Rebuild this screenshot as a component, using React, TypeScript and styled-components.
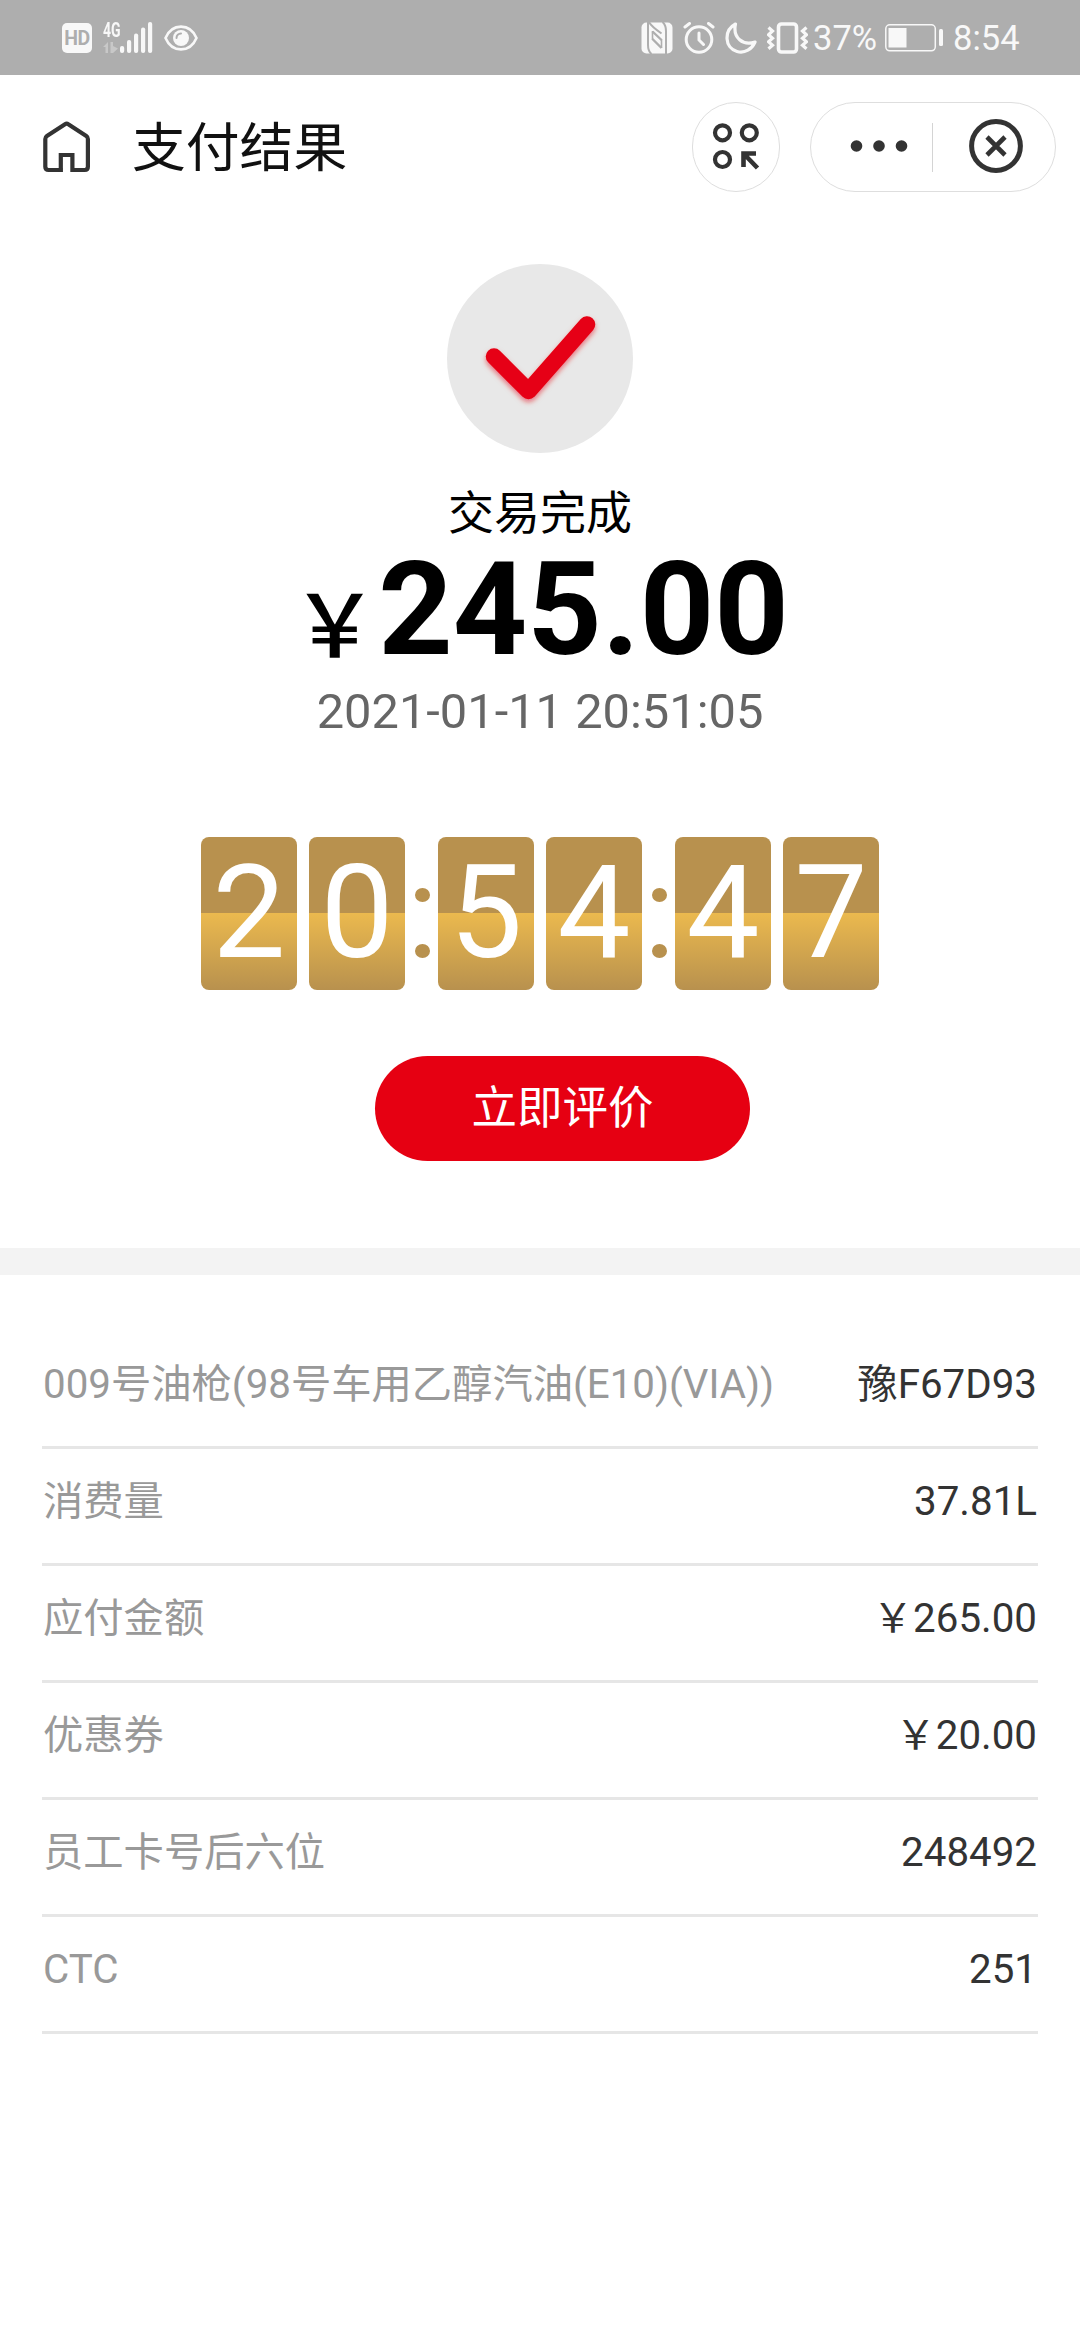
import React from "react";
import styled, { createGlobalStyle } from "styled-components";

const GlobalStyle = createGlobalStyle`
  * { box-sizing: border-box; }
  body {
    margin: 0;
    background: #fff;
    font-family: Roboto, "Noto Sans CJK SC", sans-serif;
  }
`;

const Screen = styled.div`
  width: 1080px;
  height: 2340px;
  display: flex;
  flex-direction: column;
  background: #fff;
  overflow: hidden;
`;

const StatusBar = styled.div`
  height: 75px;
  flex: none;
  display: flex;
  justify-content: space-between;
  align-items: center;
  padding: 0 61px 0 62px;
  background: #aeaeae;
  color: #f8f8f8;
`;

const StatusGroup = styled.div<{ $gap: number }>`
  display: flex;
  align-items: center;
  gap: ${(p) => p.$gap}px;
  height: 75px;
`;

const HdBadge = styled.span`
  width: 30px;
  height: 30px;
  border-radius: 5px;
  background: #f8f8f8;
  color: #aeaeae;
  font: 700 19.5px/31px Roboto, sans-serif;
  text-align: center;
  letter-spacing: -0.5px;
`;

const Network = styled.div`
  display: flex;
  align-items: flex-end;
  height: 31px;
`;

const NetworkType = styled.div`
  width: 17px;
  height: 31px;
  font: 700 20px/16px Roboto, sans-serif;

  span {
    display: block;
    transform: scaleX(0.7);
    transform-origin: left;
    white-space: nowrap;
  }
`;

const StatusText = styled.span<{ $width: number; $pull?: number }>`
  width: ${(p) => p.$width}px;
  margin-left: ${(p) => -(p.$pull ?? 0)}px;
  font-size: 34.5px;
  line-height: 40px;
  white-space: nowrap;
`;

const Header = styled.header`
  height: 144px;
  flex: none;
  display: flex;
  align-items: center;
  padding: 0 24px 0 42px;
`;

const Title = styled.h1`
  flex: 1;
  margin: 4px 0 0 40px;
  font-size: 53.8px;
  font-weight: 400;
  line-height: 140px;
  color: #111;
`;

const RoundButton = styled.button`
  width: 88px;
  height: 90px;
  margin-right: 30px;
  padding: 0;
  display: flex;
  align-items: center;
  justify-content: center;
  border: 1px solid #dedede;
  border-radius: 45px;
  background: #fff;
`;

const Capsule = styled.div`
  width: 246px;
  height: 90px;
  display: flex;
  align-items: center;
  border: 1px solid #dedede;
  border-radius: 45px;
  background: #fff;
`;

const CapsuleAction = styled.button<{ $wide?: boolean }>`
  width: ${(p) => (p.$wide ? 121 : 122)}px;
  height: 88px;
  padding: ${(p) => (p.$wide ? "0 0 0 14px" : "0 0 2px 3px")};
  display: flex;
  align-items: center;
  justify-content: center;
  border: 0;
  background: transparent;
`;

const CapsuleDivider = styled.i`
  width: 1px;
  height: 49px;
  background: #d4d4d4;
`;

const Result = styled.section`
  height: 1029px;
  flex: none;
  padding-top: 45px;
  display: flex;
  flex-direction: column;
  align-items: center;
`;

const ResultBadge = styled.div`
  width: 186px;
  height: 189px;
  border-radius: 50%;
  background: #e8e8e8;
`;

const ResultText = styled.p`
  margin: 27px 0 0;
  font-size: 46px;
  line-height: 66px;
  color: #000;
`;

const Amount = styled.p`
  margin: 0;
  height: 126px;
  display: flex;
  font-size: 130px;
  font-weight: 700;
  line-height: 128px;
  color: #000;
  white-space: nowrap;
`;

const Currency = styled.span`
  font-size: 87px;
  font-weight: 500;
  line-height: 164px;
`;

const PaidAt = styled.p`
  margin: 0;
  font-size: 48.8px;
  line-height: 80px;
  color: #666;
`;

const Clock = styled.div`
  margin-top: 85px;
  display: flex;
  height: 153px;
`;

const ClockPair = styled.div`
  display: flex;
  gap: 12px;
`;

const FlipCard = styled.span`
  width: 96px;
  height: 153px;
  border-radius: 8px;
  background: linear-gradient(#b8914e 0 76px, #ebb94e 76px, #b8914e 153px);
  color: #fff;
  font-size: 130px;
  line-height: 151px;
  text-align: center;
`;

const Colon = styled.span`
  width: 33px;
  padding: 51px 0 0 1px;
  display: flex;
  flex-direction: column;
  align-items: center;
  gap: 42px;

  i {
    width: 15px;
    height: 14px;
    border-radius: 50%;
    background: #b8914e;
  }
`;

const RateButton = styled.button`
  width: 375px;
  height: 105px;
  margin: 66px 0 0 45px;
  padding: 0;
  border: 0;
  border-radius: 53px;
  background: #e60012;
  color: #fff;
  font-family: inherit;
  font-size: 45.5px;
  line-height: 105px;
`;

const Separator = styled.div`
  height: 27px;
  flex: none;
  background: #f3f3f3;
`;

const Details = styled.dl`
  margin: 0;
  padding: 57px 42px 0;
`;

const DetailRow = styled.div`
  height: 117px;
  display: flex;
  justify-content: space-between;
  padding: 0 1px;
  border-bottom: 3px solid #e6e6e6;
  font-size: 40.3px;
  line-height: 105px;
  white-space: nowrap;
`;

const DetailLabel = styled.dt`
  color: #999;
`;

const DetailValue = styled.dd`
  margin: 0;
  color: #333;
`;

const SignalIcon = () => (
  <svg width="50" height="31" viewBox="0 0 50 31" fill="#f8f8f8">
    <g opacity=".35">
      <path d="M0 25l5-5v11H2.500v-6zM7.500 20H10v4l5 2.500-5 4.500H7.500z" />
    </g>
    <rect x="17" y="24" width="4.200" height="7" rx="2" />
    <rect x="24" y="18" width="4.200" height="13" rx="2" />
    <rect x="31" y="11.500" width="4.200" height="19.500" rx="2" />
    <rect x="38" y="5.500" width="4.200" height="25.500" rx="2" />
    <rect x="45" y="0" width="4.200" height="31" rx="2" />
  </svg>
);

const SignalBars = styled.div`
  margin-left: -17px;
  display: flex;
`;

const EyeIcon = () => (
  <svg width="34" height="28" viewBox="0 0 34 28">
    <path d="M1.500 14C8-1.200 26-1.200 32.500 14 26 29.200 8 29.200 1.500 14z" fill="none" stroke="#f8f8f8" strokeWidth="2.600" />
    <circle cx="17" cy="14" r="8" fill="#f8f8f8" />
    <path d="M12.500 14a4.500 4.500 0 0 1 4.500-4.500" fill="none" stroke="#aeaeae" strokeWidth="2" strokeLinecap="round" />
  </svg>
);

const NfcIcon = () => (
  <svg width="32" height="32" viewBox="0 0 32 32">
    <rect x="0.500" y="0.500" width="31" height="31" rx="5" fill="#f8f8f8" />
    <g fill="none" stroke="#aeaeae" strokeWidth="2">
      <path d="M7 0v23q0 6 3.500 9M25 32V9q0-6-3.500-9" />
      <path d="M8 0q2 4 12.500 11.500" />
      <path d="M11.500 9.500L20.500 18M11.500 17L20.500 26" strokeWidth="2.400" />
      <path d="M11.500 9v9M20.500 17v9" strokeWidth="1.600" />
    </g>
  </svg>
);

const AlarmIcon = () => (
  <svg width="32" height="32" viewBox="0 0 32 32" fill="none" stroke="#f8f8f8" strokeWidth="3" strokeLinecap="round">
    <circle cx="16" cy="17.500" r="12.800" />
    <path d="M16 11v7l4.500 4.500M2 5l4.500-3.500M30 5l-4.500-3.500" />
  </svg>
);

const MoonIcon = () => (
  <svg width="32" height="32" viewBox="0 0 32 32">
    <path d="M10.500 2C-1.500 8.500-.5 26 12 29.500c8 2.200 15-2.500 18-9.500C18 24 7.500 16 10.500 2z" fill="none" stroke="#f8f8f8" strokeWidth="3.200" strokeLinejoin="round" />
  </svg>
);

const VibrateIcon = () => (
  <svg width="41" height="32" viewBox="0 0 41 32" fill="none" stroke="#f8f8f8">
    <rect x="11.500" y="2" width="18" height="28" rx="3" strokeWidth="3.600" />
    <path d="M1.500 5.500l4 3.500-4 3.800 4 3.500-4 3.500 4 3.500-4 3.500M39.500 5.500l-4 3.500 4 3.800-4 3.500 4 3.500-4 3.500 4 3.500" strokeWidth="3.200" />
  </svg>
);

const BatteryIcon = () => (
  <svg width="58" height="28" viewBox="0 0 58 28">
    <rect x="0.800" y="0.800" width="49.500" height="26" rx="4" fill="none" stroke="#f8f8f8" strokeWidth="1.500" />
    <rect x="3.500" y="4" width="18" height="19.500" fill="#f8f8f8" />
    <rect x="54" y="5" width="4" height="17" rx="1.500" fill="#f8f8f8" />
  </svg>
);

const HomeIcon = () => (
  <svg width="50" height="54" viewBox="0 0 50 54" fill="none" stroke="#333" strokeWidth="4.200" strokeLinejoin="round">
    <path d="M20.500 50H6.500q-3.200 0-3.200-3.200V19q0-2 1.600-3.100L23 4.200q1.700-1.100 3.300 0L44.300 15.900q1.600 1.100 1.600 3.100v27.800q0 3.200-3.200 3.200H30.100" />
    <path d="M18.800 52V35h11.600v17" strokeLinejoin="miter" />
  </svg>
);

const AppsIcon = () => (
  <svg width="48" height="48" viewBox="0 0 48 48" fill="none" stroke="#333" strokeWidth="4.200">
    <circle cx="10.500" cy="9.800" r="7.500" />
    <circle cx="37.300" cy="9.800" r="7.500" />
    <circle cx="10.500" cy="36.500" r="7.500" />
    <path d="M31.500 44V30.500H44M32 31l13.500 14" strokeWidth="4.600" />
  </svg>
);

const MoreIcon = () => (
  <svg width="58" height="14" viewBox="0 0 58 14" fill="#333">
    <circle cx="6.500" cy="6" r="5.800" />
    <circle cx="29" cy="6" r="5.800" />
    <circle cx="51.500" cy="6" r="5.800" />
  </svg>
);

const CloseIcon = () => (
  <svg width="54" height="54" viewBox="0 0 54 54" fill="none" stroke="#333">
    <circle cx="27" cy="27" r="24.400" strokeWidth="5" />
    <path d="M18 18l18 18M36 18L18 36" strokeWidth="4.600" />
  </svg>
);

const CheckIcon = () => (
  <svg width="186" height="189" viewBox="0 0 186 189">
    <defs>
      <filter id="glow" x="-20%" y="-20%" width="140%" height="150%">
        <feDropShadow dx="0" dy="3" stdDeviation="2.500" floodColor="#e60012" floodOpacity=".5" />
      </filter>
    </defs>
    <path
      d="M47 92.500L81.500 127 140 60.500"
      fill="none"
      stroke="#e60012"
      strokeWidth="16.500"
      strokeLinecap="round"
      strokeLinejoin="round"
      filter="url(#glow)"
    />
  </svg>
);

const clock = ["20", "54", "47"];

const details = [
  ["009号油枪(98号车用乙醇汽油(E10)(VIA))", "豫F67D93"],
  ["消费量", "37.81L"],
  ["应付金额", "￥265.00"],
  ["优惠券", "￥20.00"],
  ["员工卡号后六位", "248492"],
  ["CTC", "251"],
];

export default function App() {
  return (
    <Screen>
      <GlobalStyle />
      <StatusBar>
        <StatusGroup $gap={11}>
          <HdBadge>HD</HdBadge>
          <Network>
            <NetworkType>
              <span>4G</span>
            </NetworkType>
            <SignalBars>
              <SignalIcon />
            </SignalBars>
          </Network>
          <EyeIcon />
        </StatusGroup>
        <StatusGroup $gap={10}>
          <NfcIcon />
          <AlarmIcon />
          <MoonIcon />
          <VibrateIcon />
          <StatusText $width={62} $pull={5}>37%</StatusText>
          <BatteryIcon />
          <StatusText $width={66}>8:54</StatusText>
        </StatusGroup>
      </StatusBar>

      <Header>
        <HomeIcon />
        <Title>支付结果</Title>
        <RoundButton aria-label="apps">
          <AppsIcon />
        </RoundButton>
        <Capsule>
          <CapsuleAction $wide aria-label="more">
            <MoreIcon />
          </CapsuleAction>
          <CapsuleDivider />
          <CapsuleAction aria-label="close">
            <CloseIcon />
          </CapsuleAction>
        </Capsule>
      </Header>

      <Result>
        <ResultBadge>
          <CheckIcon />
        </ResultBadge>
        <ResultText>交易完成</ResultText>
        <Amount>
          <Currency>￥</Currency>
          <span>245.00</span>
        </Amount>
        <PaidAt>2021-01-11 20:51:05</PaidAt>
        <Clock>
          {clock.map((pair, i) => (
            <React.Fragment key={i}>
              {i > 0 && (
                <Colon>
                  <i />
                  <i />
                </Colon>
              )}
              <ClockPair>
                {pair.split("").map((digit, j) => (
                  <FlipCard key={j}>{digit}</FlipCard>
                ))}
              </ClockPair>
            </React.Fragment>
          ))}
        </Clock>
        <RateButton>立即评价</RateButton>
      </Result>

      <Separator />

      <Details>
        {details.map(([label, value]) => (
          <DetailRow key={label}>
            <DetailLabel>{label}</DetailLabel>
            <DetailValue>{value}</DetailValue>
          </DetailRow>
        ))}
      </Details>
    </Screen>
  );
}
